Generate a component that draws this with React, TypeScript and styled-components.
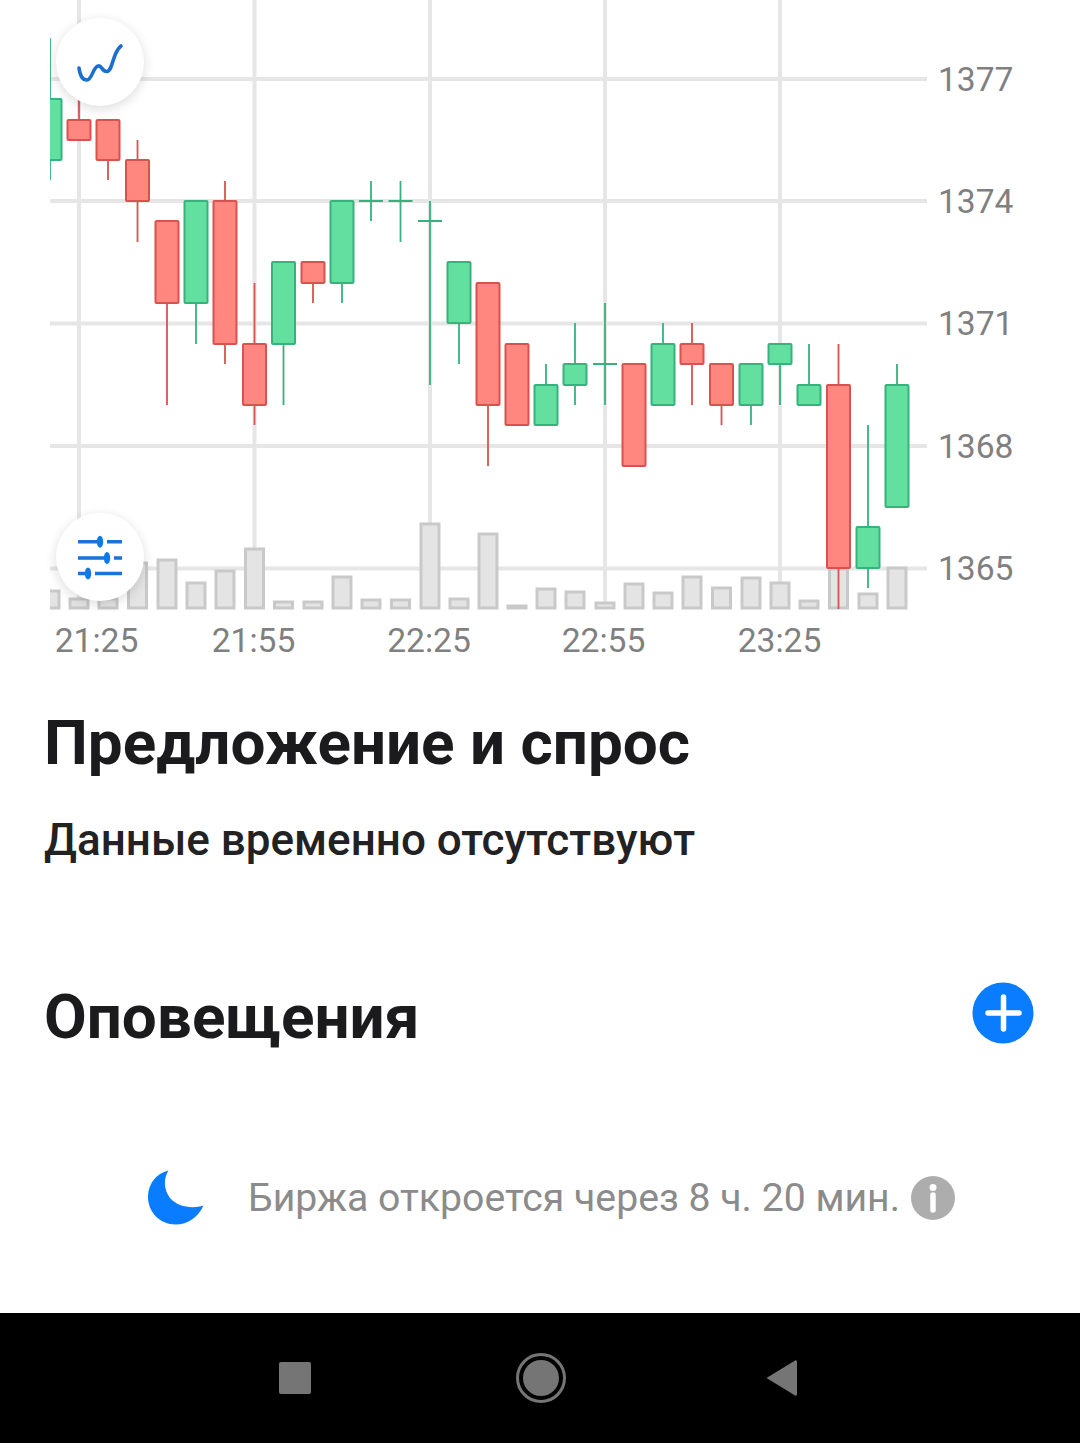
import * as React from 'react';
import styled, { createGlobalStyle } from 'styled-components';

const GlobalStyle = createGlobalStyle`
    html, body {
        margin: 0;
        padding: 0;
        background: #ffffff;
    }
    body {
        font-family: Roboto, "Noto Sans", sans-serif;
    }
`;

const Page = styled.div`
    width: 1080px;
    height: 1443px;
    display: flex;
    flex-direction: column;
    background: #ffffff;
    overflow: hidden;
`;

const ChartWrap = styled.div`
    position: relative;
    width: 1080px;
    height: 660px;
    flex: none;
`;

const ChartSvg = styled.svg`
    display: block;
`;

const AxisText = styled.text`
    font-family: Roboto, sans-serif;
    font-size: 33.6px;
    fill: #808080;
`;

const RoundButton = styled.div<{ $top: number }>`
    position: absolute;
    left: 56px;
    top: ${props => props.$top}px;
    width: 88px;
    height: 88px;
    border-radius: 50%;
    background: #ffffff;
    box-shadow: 0 3px 12px rgba(0, 0, 0, 0.14);
    display: flex;
    align-items: center;
    justify-content: center;
`;

const Content = styled.div`
    flex: 1;
    display: flex;
    flex-direction: column;
    padding: 49px 46px 0 44px;
`;

const Title = styled.h2`
    margin: 0;
    font-size: 62px;
    line-height: 68px;
    font-weight: 700;
    color: #1b1b1d;
`;

const Subtitle = styled.p`
    margin: 38px 0 0;
    font-size: 44px;
    line-height: 50px;
    font-weight: 500;
    color: #222224;
`;

const AlertsRow = styled.div`
    margin-top: 118px;
    display: flex;
    align-items: flex-start;
    justify-content: space-between;
`;

const PlusSvg = styled.svg`
    display: block;
    margin-top: -1px;
`;

const MarketRow = styled.div`
    margin-top: 119px;
    padding-left: 104px;
    display: flex;
    align-items: center;
`;

const MarketText = styled.span`
    margin-left: 44px;
    margin-right: 11px;
    font-size: 39.2px;
    line-height: 46px;
    color: #8b8b8b;
    white-space: nowrap;
`;

const NavBar = styled.div`
    flex: none;
    height: 130px;
    background: #000000;
    display: grid;
    grid-template-columns: 32px 205px 50px 199px 32px;
    padding-left: 279px;
    align-items: center;
`;

const NavSquare = styled.div`
    width: 32px;
    height: 32px;
    border-radius: 2px;
    background: #757575;
`;

const NavHome = styled.div`
    grid-column: 3;
    box-sizing: border-box;
    width: 50px;
    height: 50px;
    border: 3px solid #757575;
    border-radius: 50%;
    padding: 4px;
`;

const NavHomeDot = styled.div`
    width: 100%;
    height: 100%;
    border-radius: 50%;
    background: #757575;
`;

const NavBack = styled.svg`
    grid-column: 5;
    display: block;
`;

interface Candle {
    x: number;
    up: boolean;
    top: number;
    bottom: number;
    high: number;
    low: number;
}

const c = (x: number, up: boolean, top: number, bottom: number, high = top, low = bottom): Candle => ({ x, up, top, bottom, high, low });

const candles: Candle[] = [
    c(50, true, 99, 160, 38, 180),
    c(79, false, 120, 140, 100, 140),
    c(108, false, 120, 160, 120, 180),
    c(137.5, false, 160, 201, 140, 242),
    c(167, false, 221, 303, 221, 405),
    c(196, true, 201, 303, 201, 344),
    c(225, false, 201, 344, 181, 364),
    c(254.5, false, 344, 405, 283, 425),
    c(283.5, true, 262, 344, 262, 405),
    c(313, false, 262, 283, 262, 303),
    c(342, true, 201, 283, 201, 303),
    c(371, true, 201, 201, 181, 221),
    c(400.5, true, 201, 201, 181, 242),
    c(430, true, 221, 221, 201, 385),
    c(459, true, 262, 323, 262, 364),
    c(488, false, 283, 405, 283, 466),
    c(517, false, 344, 425),
    c(546, true, 385, 425, 364, 425),
    c(575, true, 364, 385, 323, 405),
    c(605, true, 364, 364, 303, 405),
    c(634, false, 364, 466),
    c(663, true, 344, 405, 323, 405),
    c(692, false, 344, 364, 323, 405),
    c(721.5, false, 364, 405, 364, 425),
    c(751, true, 364, 405, 364, 425),
    c(780, true, 344, 364, 344, 405),
    c(809, true, 385, 405, 344, 405),
    c(838.5, false, 385, 568, 344, 609),
    c(868, true, 527, 568, 425, 588),
    c(897, true, 385, 507, 364, 507),
];

const volumes = [590, 598, 598, 562, 559, 582, 570, 548, 601, 601, 576, 599, 599, 523, 598, 533, 605, 588, 591, 602, 583, 592, 576, 587, 577, 582, 600, 568, 593, 567];

const priceLines = [
    { y: 79, label: '1377' },
    { y: 201, label: '1374' },
    { y: 323.5, label: '1371' },
    { y: 446, label: '1368' },
    { y: 568.5, label: '1365' },
];

const timeLines = [
    { x: 79, labelX: 96.5, label: '21:25' },
    { x: 254.5, labelX: 253.5, label: '21:55' },
    { x: 430, labelX: 429, label: '22:25' },
    { x: 605, labelX: 603.5, label: '22:55' },
    { x: 780, labelX: 779.5, label: '23:25' },
];

const GREEN_FILL = '#63e0a0';
const GREEN_LINE = '#36b27d';
const RED_FILL = '#ff8780';
const RED_LINE = '#d8534f';

const Chart: React.FC = () => (
    <ChartSvg width={1080} height={660} viewBox="0 0 1080 660">
        <defs>
            <clipPath id="plot">
                <rect x={50} y={0} width={877} height={612} />
            </clipPath>
        </defs>
        <g clipPath="url(#plot)">
            {timeLines.map(line => (
                <line key={line.x} x1={line.x} x2={line.x} y1={0} y2={609} stroke="#e6e6e6" strokeWidth={4} />
            ))}
            {priceLines.map(line => (
                <line key={line.y} x1={50} x2={927} y1={line.y} y2={line.y} stroke="#e6e6e6" strokeWidth={4} />
            ))}
            {volumes.map((top, i) => (
                <rect
                    key={i}
                    x={candles[i].x - 9}
                    y={top + 1}
                    width={18}
                    height={607 - top}
                    fill="#e4e4e4"
                    stroke="#c9c9c9"
                    strokeWidth={3}
                />
            ))}
            {candles.map(item => {
                const line = item.up ? GREEN_LINE : RED_LINE;
                const fill = item.up ? GREEN_FILL : RED_FILL;
                const isDoji = item.top === item.bottom;
                return (
                    <g key={item.x}>
                        <line x1={item.x} x2={item.x} y1={item.high} y2={item.low} stroke={line} strokeWidth={1.8} />
                        {isDoji ? (
                            <line x1={item.x - 12} x2={item.x + 12} y1={item.top} y2={item.top} stroke={line} strokeWidth={2} />
                        ) : (
                            <rect
                                x={item.x - 11.5}
                                y={item.top}
                                width={23}
                                height={item.bottom - item.top}
                                rx={1}
                                fill={fill}
                                stroke={line}
                                strokeWidth={2}
                            />
                        )}
                    </g>
                );
            })}
        </g>
        {priceLines.map(line => (
            <AxisText key={line.label} x={938} y={line.y + 11.5}>{line.label}</AxisText>
        ))}
        {timeLines.map(line => (
            <AxisText key={line.label} x={line.labelX} y={652} textAnchor="middle">{line.label}</AxisText>
        ))}
    </ChartSvg>
);

const WaveIcon = () => (
    <svg width={88} height={88} viewBox="56 18 88 88" fill="none">
        <path
            d="M79 68C80 76 83 80 87 80C92 80 93 67 98 66C102 65 102 72 107 71.5C113 71 112 53 121 46"
            stroke="#1b6fcf"
            strokeWidth={3.6}
            strokeLinecap="round"
        />
    </svg>
);

const SlidersIcon = () => (
    <svg width={88} height={88} viewBox="56 513 88 88" fill="none">
        <g stroke="#1b72d8" strokeWidth={3.6}>
            <path d="M78 541.7H100M107 541.7H122" />
            <path d="M78 558H107M114 558H122" />
            <path d="M78 573.5H88M95 573.5H122" />
        </g>
        <g fill="#0f7ae5">
            <ellipse cx={100} cy={541.7} rx={3.2} ry={6} />
            <ellipse cx={107} cy={558} rx={3.2} ry={6} />
            <ellipse cx={88} cy={573.5} rx={3.2} ry={6} />
        </g>
    </svg>
);

const PlusButton = () => (
    <PlusSvg width={62} height={62} viewBox="0 0 62 62">
        <circle cx={31} cy={31} r={30.5} fill="#0a7cff" />
        <path d="M16 31H47M31.5 15V47" stroke="#ffffff" strokeWidth={5.5} strokeLinecap="round" />
    </PlusSvg>
);

const MoonIcon = () => (
    <svg width={56} height={55} viewBox="0 0 56 55">
        <path
            d="M20.5 .5C8 3.5 0 14 0 27C0 42 12 54.5 27.5 54.5C40 54.5 50.5 47 55.5 35.5C44 39 30 37 22 28C16 20 15 9 20.5 .5Z"
            fill="#0a7cff"
        />
    </svg>
);

const InfoIcon = () => (
    <svg width={44} height={44} viewBox="0 0 44 44">
        <circle cx={22} cy={22} r={22} fill="#adadad" />
        <circle cx={22} cy={11.5} r={3.5} fill="#ffffff" />
        <path d="M22 19V34" stroke="#ffffff" strokeWidth={5.5} strokeLinecap="round" />
    </svg>
);

export default function App() {
    return (
        <Page>
            <GlobalStyle />
            <ChartWrap>
                <Chart />
                <RoundButton $top={18}><WaveIcon /></RoundButton>
                <RoundButton $top={513}><SlidersIcon /></RoundButton>
            </ChartWrap>
            <Content>
                <Title>Предложение и спрос</Title>
                <Subtitle>Данные временно отсутствуют</Subtitle>
                <AlertsRow>
                    <Title>Оповещения</Title>
                    <PlusButton />
                </AlertsRow>
                <MarketRow>
                    <MoonIcon />
                    <MarketText>Биржа откроется через 8 ч. 20 мин.</MarketText>
                    <InfoIcon />
                </MarketRow>
            </Content>
            <NavBar>
                <NavSquare />
                <NavHome><NavHomeDot /></NavHome>
                <NavBack width={32} height={38} viewBox="0 0 32 38">
                    <path d="M30 1.5L1.5 19L30 36.5Q32 37.5 32 35V3Q32 .5 30 1.5Z" fill="#757575" />
                </NavBack>
            </NavBar>
        </Page>
    );
}
